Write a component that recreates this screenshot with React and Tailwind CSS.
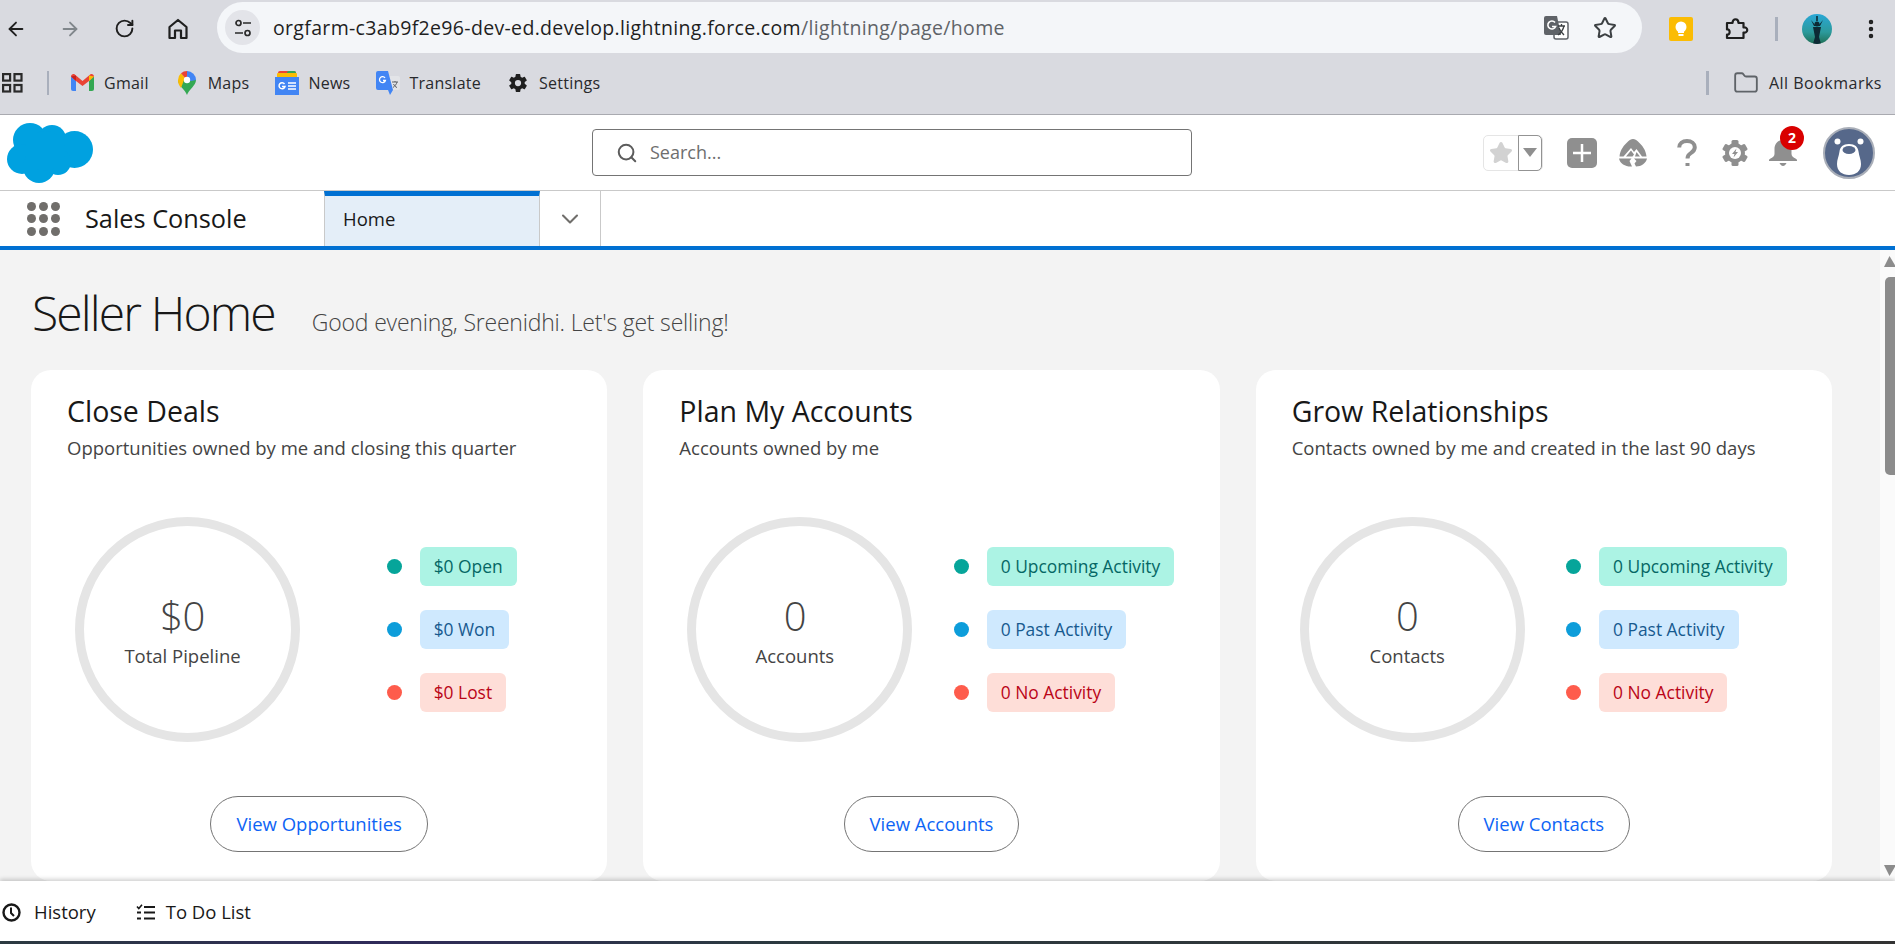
import React from "react";
import { ArrowLeft, ArrowRight, RotateCw, Star, Search, ChevronDown, EllipsisVertical, Folder } from "lucide-react";
import { IoSettingsSharp } from "react-icons/io5";

function HomeIcon() {
  return (
    <svg width="22" height="24" viewBox="0 0 22 24" fill="none" stroke="#1f1f1f" strokeWidth="2.2" strokeLinejoin="round">
      <path d="M2.5 10 11 3l8.5 7v11h-5.5v-7.500h-6V21H2.500z" />
    </svg>
  );
}

function TuneIcon() {
  return (
    <svg width="20" height="20" viewBox="0 0 20 20" fill="none" stroke="#2a2a2a" strokeWidth="1.7">
      <circle cx="5.500" cy="5" r="2.500" />
      <path d="M10 5h8M2 15h8" />
      <circle cx="14.500" cy="15" r="2.500" />
    </svg>
  );
}

function TranslateIcon() {
  return (
    <svg width="26" height="26" viewBox="0 0 26 26">
      <rect x="11" y="7" width="14" height="17" rx="2" fill="#fff" stroke="#5f6368" strokeWidth="1.500" />
      <path d="M3 1h11l4 19H3a2 2 0 0 1-2-2V3a2 2 0 0 1 2-2z" fill="#5f6368" />
      <path d="M12 7.500a4 4 0 1 0 .6 4H9" fill="none" stroke="#fff" strokeWidth="1.600" />
      <path d="M15 11h7M18.500 9v2M21 11c-1 4-3 7-6 9M16 13c1 3 3 5 5 7" fill="none" stroke="#3c4043" strokeWidth="1.300" />
    </svg>
  );
}

function KeepIcon() {
  return (
    <svg width="24" height="24" viewBox="0 0 24 24">
      <rect width="24" height="24" rx="2" fill="#fbbc04" />
      <circle cx="12" cy="10" r="5.500" fill="#fff" />
      <rect x="9" y="13" width="6" height="3" fill="#fff" />
      <rect x="9.500" y="17" width="5" height="2" fill="#fff" />
    </svg>
  );
}

function PuzzleIcon() {
  return (
    <svg width="24" height="24" viewBox="0 0 24 24" fill="none" stroke="#1f1f1f" strokeWidth="2.200" strokeLinejoin="round">
      <path d="M2 6h5.500c0-5 6-5 6 0H18.500v4.500c5-1 5 6 0 5V21H2v-3.500c3.500 1 3.500-6 0-5z" />
    </svg>
  );
}

function AppsIcon() {
  return (
    <svg width="21" height="20" viewBox="0 0 21 20" fill="none" stroke="#2a2a2a" strokeWidth="2.200">
      <rect x="1.100" y="1.100" width="7" height="6.500" />
      <rect x="12.500" y="1.100" width="7" height="6.500" />
      <rect x="1.100" y="12" width="7" height="6.500" />
      <rect x="12.500" y="12" width="7" height="6.500" />
    </svg>
  );
}

function GmailIcon() {
  return (
    <svg width="23" height="17" viewBox="0 0 23 17">
      <path d="M0 2.500 0 15a2 2 0 0 0 2 2h3V7z" fill="#4285f4" />
      <path d="M23 2.500V15a2 2 0 0 1-2 2h-3V7z" fill="#34a853" />
      <path d="M0 2.500C0 .5 2.300-.6 3.800.6L11.500 7l7.700-6.400C20.700-.6 23 .5 23 2.500L18 7l-6.500 5L5 7z" fill="#ea4335" />
      <path d="M18 1.500 23 2.500 18 7z" fill="#fbbc04" />
      <path d="M5 1.500 0 2.500 5 7z" fill="#c5221f" />
    </svg>
  );
}

function MapsIcon() {
  return (
    <svg width="18" height="24" viewBox="0 0 18 24">
      <path d="M9 24C7.500 19 0 14.500 0 9h18c0 5.500-7.500 10-9 15z" fill="#34a853" />
      <path d="M0 9a9 9 0 0 1 3-6.700L9 9z" fill="#fbbc04" />
      <path d="M3 2.300A9 9 0 0 1 9 0l4 5-4 4z" fill="#ea4335" />
      <path d="M9 0a9 9 0 0 1 9 9l-5 1-4-1z" fill="#4285f4" />
      <path d="M0 9h6l-3 8C1 14.500 0 12 0 9z" fill="#fbbc04" />
      <circle cx="9" cy="9" r="3.200" fill="#fff" />
    </svg>
  );
}

function NewsIcon() {
  return (
    <svg width="24" height="24" viewBox="0 0 24 24">
      <rect x="3" y="0" width="18" height="8" rx="2" fill="#ea4335" />
      <rect x="12" y="0" width="9" height="8" rx="2" fill="#34a853" />
      <rect x="2" y="2" width="20" height="6" rx="1" fill="#fbbc04" />
      <rect y="6" width="24" height="18" fill="#4285f4" />
      <path d="M9.500 13a3 3 0 1 0 .5 2.500H7" fill="none" stroke="#fff" strokeWidth="1.500" />
      <path d="M13 12h8M13 15h8M13 18h8" stroke="#fff" strokeWidth="1.500" />
    </svg>
  );
}

function GTranslateIcon() {
  return (
    <svg width="24" height="24" viewBox="0 0 24 24">
      <path d="M12 5h10a2 2 0 0 1 2 2v10a2 2 0 0 1-2 2H14z" fill="#e3e4e8" />
      <path d="M2 0h10l5 19-3 5-2-5H2a2 2 0 0 1-2-2V2a2 2 0 0 1 2-2z" fill="#4285f4" />
      <path d="M9 7a3 3 0 1 0 .4 2.500H7" fill="none" stroke="#fff" strokeWidth="1.300" />
      <path d="M16 11h6M19 10v1M21 11c-.7 2.500-2 4-4 5.500M17.500 13c.7 1.500 2 3 3.500 3.500" fill="none" stroke="#5f6368" strokeWidth="1" />
    </svg>
  );
}

function Bookmark({ icon, label, cls }) {
  return (
    <div className={`flex items-center ${cls}`}>
      {icon}
      <span className="text-[16px] text-[#28292c] tracking-[0.25px]">{label}</span>
    </div>
  );
}

function CloudLogo() {
  return (
    <svg width="86" height="60" viewBox="0 0 86 60" fill="#00a1e0">
      <circle cx="23" cy="17" r="17" />
      <circle cx="45" cy="16" r="14" />
      <circle cx="67.500" cy="26.500" r="18.500" />
      <circle cx="15" cy="36" r="15" />
      <circle cx="32" cy="44" r="16" />
      <circle cx="51" cy="39" r="13" />
      <circle cx="38" cy="28" r="20" />
    </svg>
  );
}

function TrailIcon() {
  return (
    <svg width="28" height="28" viewBox="0 0 28 28" fill="#8f8f8f">
      <path d="M14 0c2 0 3.500 1 5 2.500 4 3.500 8 8.500 8.500 15H23L17.500 10 15 13l-3-4-7.500 8.500H.5C1 11 5 6 9 2.500 10.500 1 12 0 14 0z" />
      <path d="M7 17.500 12 11.500l3 4-1.500 2zM16 17.500l1.500-4.500 3.500 4.500z" />
      <path d="M0 19.500h12.500l-2 2.500 2.500 5.500C7 28 1 25 0 19.500zM15 19.500h13c-1 4.500-5.500 8-11 8l-1.500-3 2-2.500z" />
    </svg>
  );
}

function QuestionIcon() {
  return (
    <svg width="20" height="28" viewBox="0 0 20 28" fill="none" stroke="#8f8f8f" strokeWidth="4">
      <path d="M2.200 8.500C2.200 4.500 5.500 2 10 2s7.800 2.500 7.800 6.300c0 3-1.800 4.500-4 5.800-2 1.200-3.300 2.200-3.300 5.400" />
      <rect x="8.500" y="24" width="4" height="3" fill="#8f8f8f" stroke="none" />
    </svg>
  );
}

function GearBolt() {
  const teeth = [0, 60, 120, 180, 240, 300];
  return (
    <svg width="26" height="26" viewBox="0 0 26 26">
      <g fill="#8f8f8f">
        {teeth.map((a) => (
          <rect key={a} x="9.500" y="0" width="7" height="8" rx="1.500" transform={`rotate(${a} 13 13)`} />
        ))}
        <circle cx="13" cy="13" r="10" />
      </g>
      <circle cx="13" cy="13" r="6" fill="#fff" />
      <path d="M14.500 8.500 10 14h2.500l-1 3.500 4.500-5.500h-2.500z" fill="#8f8f8f" />
    </svg>
  );
}

function BellIcon() {
  return (
    <svg width="28" height="28" viewBox="0 0 28 28" fill="#8f8f8f">
      <path d="M14 1c5.500 0 8.500 4 8.500 9v5c0 2 2 3.500 4 4.500.9.500 1.500 1 1.500 2V22H0v-.5c0-1 .6-1.500 1.500-2 2-1 4-2.500 4-4.500v-5c0-5 3-9 8.500-9z" />
      <path d="M10.500 24h7c-.5 1.500-2 3-3.500 3s-3-1.500-3.500-3z" />
    </svg>
  );
}

function BearAvatar() {
  return (
    <svg width="52" height="52" viewBox="0 0 52 52">
      <circle cx="26" cy="26" r="25" fill="#56688a" stroke="#a9aeb8" strokeWidth="2" />
      <circle cx="14.500" cy="14.500" r="3" fill="#fff" />
      <circle cx="37.500" cy="14.500" r="3" fill="#fff" />
      <path d="M26 17c6 0 9 3 9.500 7.500.7 5 2.500 8 2.500 12.500 0 7-5 11-12 11s-12-4-12-11c0-4.500 1.800-7.500 2.500-12.500C17 20 20 17 26 17z" fill="#fff" />
      <ellipse cx="26" cy="23" rx="6.500" ry="4" fill="#56688a" />
    </svg>
  );
}

function ClockIcon() {
  return (
    <svg width="19" height="19" viewBox="0 0 19 19" fill="none" stroke="#181818" strokeWidth="2.400">
      <circle cx="9.500" cy="9.500" r="8" />
      <path d="M9 4.500v5.500l3 3" strokeWidth="2" />
    </svg>
  );
}

function TodoIcon() {
  return (
    <svg width="19" height="17" viewBox="0 0 19 17" fill="none" stroke="#181818" strokeWidth="2.200">
      <path d="M1 2.500 2.800 4.500 6 .8" strokeWidth="1.600" />
      <path d="M8 3h11M8 8.500h11M8 14.500h11M1 8.500h4M1 14.500h4" />
    </svg>
  );
}

const tones = {
  teal: { dot: "bg-[#06a59a]", badge: "bg-[#acf3e4] text-[#056764]" },
  blue: { dot: "bg-[#0d9dda]", badge: "bg-[#cfe9fe] text-[#175a8f]" },
  red: { dot: "bg-[#fe5c4c]", badge: "bg-[#feded8] text-[#ba0517]" },
};

const cards = [
  {
    title: "Close Deals",
    sub: "Opportunities owned by me and closing this quarter",
    value: "$0",
    label: "Total Pipeline",
    rows: [["teal", "$0 Open"], ["blue", "$0 Won"], ["red", "$0 Lost"]],
    action: "View Opportunities",
  },
  {
    title: "Plan My Accounts",
    sub: "Accounts owned by me",
    value: "0",
    label: "Accounts",
    rows: [["teal", "0 Upcoming Activity"], ["blue", "0 Past Activity"], ["red", "0 No Activity"]],
    action: "View Accounts",
  },
  {
    title: "Grow Relationships",
    sub: "Contacts owned by me and created in the last 90 days",
    value: "0",
    label: "Contacts",
    rows: [["teal", "0 Upcoming Activity"], ["blue", "0 Past Activity"], ["red", "0 No Activity"]],
    action: "View Contacts",
  },
];

function Card({ c }) {
  return (
    <section className="flex-1 h-[511px] bg-white rounded-[20px] pt-[22px] flex flex-col">
      <h2 className="pl-9 text-[28.5px] leading-[38px] text-[#181818]">{c.title}</h2>
      <p className="pl-9 mt-[5px] text-[18.5px] leading-[26px] text-[#444444]">{c.sub}</p>
      <div className="mt-[56px] flex items-center pl-11 pr-1">
        <div className="w-[225px] h-[225px] rounded-full border-[9px] border-[#e5e5e5] flex flex-col items-center shrink-0 pr-[10px]">
          <span className="mt-[64px] text-[40px] leading-[52px] font-light text-[#444444] tracking-[-0.5px]">{c.value}</span>
          <span className="mt-[1px] text-[18.5px] leading-[26px] text-[#444444]">{c.label}</span>
        </div>
        <div className="flex-1 flex justify-center">
          <div className="flex flex-col gap-6">
            {c.rows.map(([tone, text]) => (
              <div key={text} className="flex items-center gap-[18px]">
                <span className={`w-[15px] h-[15px] rounded-full ${tones[tone].dot}`} />
                <span className={`h-[39px] px-[14px] flex items-center rounded-[6px] text-[17.4px] ${tones[tone].badge}`}>{text}</span>
              </div>
            ))}
          </div>
        </div>
      </div>
      <div className="mt-[54px] flex justify-center">
        <button className="h-[56px] px-[25px] rounded-full border border-[#747474] text-[18.5px] text-[#0d64f5]">{c.action}</button>
      </div>
    </section>
  );
}

export default function App() {
  return (
    <div className="w-full h-[944px] overflow-hidden flex flex-col bg-white font-['Open_Sans',sans-serif] text-[#181818]">
      <div className="h-[115px] shrink-0 bg-[#d9dae0] border-b border-[#a9aab0] flex flex-col">
        <div className="h-[57px] flex items-center relative">
          <ArrowLeft className="ml-[5px] w-[22px] h-[22px] text-[#1f1f1f]" strokeWidth={2} />
          <ArrowRight className="ml-[32px] w-[22px] h-[22px] text-[#80868b]" strokeWidth={2} />
          <RotateCw className="ml-[33px] w-[21px] h-[21px] text-[#1f1f1f]" strokeWidth={2.200} />
          <div className="ml-[32px]"><HomeIcon /></div>
          <div className="ml-[28px] w-[1425px] h-[51px] -mt-[2px] rounded-full bg-[#f4f6f9] flex items-center pl-2 pr-[25px]">
            <div className="w-[35px] h-[35px] rounded-full bg-[#e3e4e9] flex items-center justify-center"><TuneIcon /></div>
            <span className="ml-[13px] text-[19.5px] tracking-[0.33px] text-[#1f1f1f] whitespace-nowrap">
              orgfarm-c3ab9f2e96-dev-ed.develop.lightning.force.com<span className="text-[#5f6368]">/lightning/page/home</span>
            </span>
            <div className="ml-auto flex items-center gap-[24px]">
              <TranslateIcon />
              <Star className="w-[24px] h-[24px] text-[#3c4043]" strokeWidth={2} />
            </div>
          </div>
          <div className="ml-[27px]"><KeepIcon /></div>
          <div className="ml-[32px]"><PuzzleIcon /></div>
          <div className="ml-[26px] w-[3px] h-[24px] bg-[#a9afbc]" />
          <div className="ml-[24px] w-[30px] h-[30px] rounded-full bg-[linear-gradient(180deg,#29a7d6_0%,#2c9a9c_60%,#1f6f55_100%)] flex items-end justify-center overflow-hidden">
            <svg width="18" height="28" viewBox="0 0 18 28" fill="#0d2a35"><circle cx="9" cy="8" r="2.500" /><path d="M8.200 0h1.600v5H8.200zM5 11h8l-2 10 2 7H5l2-7zM3 4l5 6H6zM15 4l-5 6h2z" /></svg>
          </div>
          <EllipsisVertical className="ml-[27px] w-[24px] h-[24px] text-[#1f1f1f]" strokeWidth={2.500} />
        </div>
        <div className="h-[57px] flex items-center pb-[6px]">
          <div className="ml-[2px]"><AppsIcon /></div>
          <div className="ml-[24px] w-[2px] h-[24px] bg-[#a9afbc]" />
          <Bookmark cls="ml-[22px] gap-[10px]" icon={<GmailIcon />} label="Gmail" />
          <Bookmark cls="ml-[29px] gap-[12px]" icon={<MapsIcon />} label="Maps" />
          <Bookmark cls="ml-[26px] gap-[9px]" icon={<NewsIcon />} label="News" />
          <Bookmark cls="ml-[26px] gap-[9px]" icon={<GTranslateIcon />} label="Translate" />
          <Bookmark cls="ml-[27px] gap-[11px]" icon={<IoSettingsSharp className="w-[20px] h-[20px] text-[#1f1f1f]" />} label="Settings" />
          <div className="ml-auto w-[3px] h-[24px] bg-[#a9afbc]" />
          <Folder className="ml-[24px] w-[26px] h-[26px] text-[#5f6368]" strokeWidth={1.700} />
          <span className="ml-[10px] mr-[13px] text-[16px] text-[#28292c] tracking-[0.5px]">All Bookmarks</span>
        </div>
      </div>

      <header className="h-[76px] shrink-0 bg-white border-b border-[#c9c9c9] flex items-center relative">
        <div className="ml-[7px]"><CloudLogo /></div>
        <div className="ml-[499px] w-[600px] h-[47px] rounded-[4px] border border-[#747474] flex items-center pl-[23px]">
          <Search className="w-[22px] h-[22px] text-[#5c5c5c]" strokeWidth={2.200} />
          <span className="ml-[12px] text-[18px] text-[#6e6e6e]">Search...</span>
        </div>
        <div className="ml-[291px] flex items-center h-[36px] w-[60px] rounded-[5px] border border-[#e5e5e5]">
          <div className="w-[34px] flex justify-center"><Star className="w-[24px] h-[24px] text-[#d2d2d2] fill-[#d2d2d2]" /></div>
          <div className="flex-1 h-[36px] border border-[#939393] rounded-r-[5px] flex items-center justify-center">
            <svg width="14" height="9" viewBox="0 0 14 9" fill="#8f8f8f"><path d="M0 0h14L7 9z" /></svg>
          </div>
        </div>
        <div className="ml-[24px] w-[30px] h-[30px] rounded-[5px] bg-[#8f8f8f] flex items-center justify-center">
          <svg width="18" height="18" viewBox="0 0 18 18" stroke="#fff" strokeWidth="2.500"><path d="M9 0v18M0 9h18" /></svg>
        </div>
        <div className="ml-[22px]"><TrailIcon /></div>
        <div className="ml-[30px]"><QuestionIcon /></div>
        <div className="ml-[25px]"><GearBolt /></div>
        <div className="ml-[21px] relative">
          <BellIcon />
          <span className="absolute -top-[13px] left-[11px] w-[24px] h-[24px] rounded-full bg-[#d90000] text-white text-[14px] font-bold flex items-center justify-center">2</span>
        </div>
        <div className="ml-[26px]"><BearAvatar /></div>
      </header>

      <nav className="h-[59px] shrink-0 bg-white border-b-[4px] border-[#0070d2] flex">
        <div className="w-[324px] flex items-center">
          <div className="ml-[27px] grid grid-cols-3 gap-x-[3px] gap-y-[3.500px]">
            {[1, 2, 3, 4, 5, 6, 7, 8, 9].map((i) => (
              <span key={i} className="w-[9px] h-[9px] rounded-full bg-[#706e6b]" />
            ))}
          </div>
          <span className="ml-[25px] text-[25.3px] text-[#181818]">Sales Console</span>
        </div>
        <div className="w-[216px] bg-[#e4eef8] border-t-[5px] border-t-[#0070d2] border-l border-r border-[#c9c9c9] flex items-center pl-[18px] pb-[4px]">
          <span className="text-[18.5px] text-[#181818]">Home</span>
        </div>
        <div className="w-[61px] border-r border-[#c9c9c9] flex items-center justify-center">
          <ChevronDown className="w-[28px] h-[28px] text-[#706e6b]" strokeWidth={1.800} />
        </div>
      </nav>

      <div className="flex-1 min-h-0 flex bg-[#f3f3f3]">
        <main className="flex-1 min-w-0 pl-[31px] pr-[48px] overflow-hidden">
          <div className="h-[120px] flex items-baseline pt-[32px] pl-px">
            <h1 className="text-[48px] leading-[62px] font-light text-[#181818] tracking-[-1.850px]">Seller Home</h1>
            <p className="ml-[37px] text-[23px] font-light text-[#444444] tracking-[-0.2px]">Good evening, Sreenidhi. Let's get selling!</p>
          </div>
          <div className="flex gap-[36px]">
            {cards.map((c) => <Card key={c.title} c={c} />)}
          </div>
        </main>
        <aside className="w-[15px] shrink-0 bg-[#fafafa] flex flex-col pl-[4px] pt-[6px] pb-[5px]">
          <svg width="11" height="11" viewBox="0 0 11 11" fill="#8c8c8c"><path d="M5.500 0 12 11H0z" /></svg>
          <div className="mt-[10px] h-[198px] bg-[#8c8c8c] rounded-l-[5px] ml-[1px]" />
          <svg className="mt-auto" width="11" height="11" viewBox="0 0 11 11" fill="#8c8c8c"><path d="M0 0h12L5.500 11z" /></svg>
        </aside>
      </div>

      <footer className="h-[63px] shrink-0 bg-white relative shadow-[0_-2px_4px_rgba(0,0,0,0.18)] flex flex-col">
        <div className="h-[60px] flex items-center pl-[2px] pt-[2px] text-[18.5px] text-[#181818]">
          <ClockIcon />
          <span className="ml-[13px]">History</span>
          <div className="ml-[40px]"><TodoIcon /></div>
          <span className="ml-[11px]">To Do List</span>
        </div>
        <div className="h-[3px] bg-[linear-gradient(90deg,#2c3a40_0%,#2f2a5a_20%,#2c3a40_40%,#333_100%)]" />
      </footer>
    </div>
  );
}
